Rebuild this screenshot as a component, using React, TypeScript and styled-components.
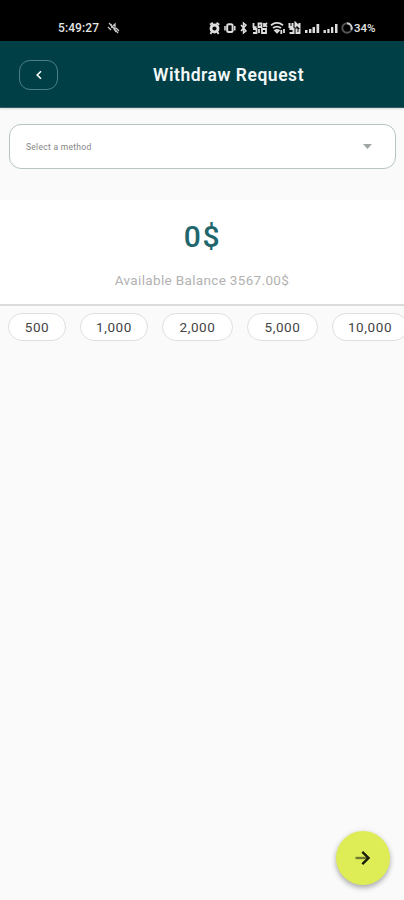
import React from "react";
import styled, { createGlobalStyle } from "styled-components";

const GlobalStyle = createGlobalStyle`
  * { box-sizing: border-box; }
  body { margin: 0; background: #fafafa; }
  button { font: inherit; padding: 0; }
`;

const Screen = styled.div`
  width: 404px;
  height: 900px;
  display: flex;
  flex-direction: column;
  overflow: hidden;
  background: #fafafa;
  font-family: Roboto, "Open Sans", sans-serif;
`;

const StatusBar = styled.div`
  height: 41px;
  flex: none;
  display: flex;
  align-items: center;
  padding: 14px 27px 0 58px;
  background: #000;
  color: #e4e4e4;
`;

const Clock = styled.span`
  width: 49px;
  font-size: 12px;
  line-height: 14px;
  font-weight: 500;
  letter-spacing: 0.1px;
`;

const StatusIcons = styled.div`
  margin-left: auto;
  display: flex;
  align-items: center;
`;

const Battery = styled.span`
  width: 23px;
  font-size: 11.5px;
  line-height: 14px;
  font-weight: 500;
  letter-spacing: 0;
`;

const Header = styled.header`
  height: 67px;
  flex: none;
  display: grid;
  grid-template-columns: 39px 1fr;
  align-items: center;
  padding: 2px 0 0 19px;
  background: #003f46;
  border-bottom: 1px solid #315d62;
  box-shadow: 0 1px 2px rgba(0, 0, 0, 0.15);
`;

const BackButton = styled.button`
  width: 39px;
  height: 30px;
  display: grid;
  place-items: center;
  border: 1px solid #4c7f8a;
  border-radius: 11px;
  background: transparent;
  color: #fff;
`;

const Title = styled.h1`
  margin: 0 0 0 95px;
  color: #f3f8f8;
  font-size: 17.5px;
  line-height: 22px;
  font-weight: 600;
  letter-spacing: 0.53px;
`;

const MethodSelect = styled.button`
  height: 45px;
  flex: none;
  display: flex;
  align-items: center;
  justify-content: space-between;
  margin: 16px 8px 31px 9px;
  padding: 0 23px 0 16px;
  border: 1px solid #b7c4c4;
  border-radius: 12px;
  background: #fff;
  color: #858585;
`;

const Placeholder = styled.span`
  font-size: 8.5px;
  line-height: 12px;
  letter-spacing: 0.28px;
`;

const BalancePanel = styled.section`
  height: 106px;
  flex: none;
  display: flex;
  flex-direction: column;
  align-items: center;
  padding-top: 18px;
  background: #fff;
  border-bottom: 2px solid #dadcdc;
`;

const Amount = styled.div`
  padding-left: 1px;
  color: #20666c;
  font-size: 30px;
  line-height: 38px;
  font-weight: 500;
  letter-spacing: 1.6px;
`;

const Available = styled.div`
  margin-top: 15px;
  color: #b2b2b2;
  font-size: 13.5px;
  line-height: 18px;
  letter-spacing: 0.34px;
`;

const Chips = styled.div`
  display: flex;
  flex: none;
  gap: 14px;
  padding: 7px 0 0 8px;
`;

const Chip = styled.button<{ $width: number }>`
  width: ${({ $width }) => $width}px;
  height: 28px;
  flex: none;
  border: 1px solid #dfdfdf;
  border-radius: 14px;
  background: #fff;
  color: #444;
  font-size: 13.5px;
  line-height: 26px;
  letter-spacing: 0.6px;
`;

const Footer = styled.footer`
  margin-top: auto;
  display: flex;
  justify-content: flex-end;
  padding: 0 14px 15px;
`;

const NextButton = styled.button`
  width: 54px;
  height: 54px;
  display: grid;
  place-items: center;
  border: 0;
  border-radius: 50%;
  background: #deed55;
  box-shadow: 0 3px 5px rgba(0, 0, 0, 0.25), 0 1px 7px rgba(0, 0, 0, 0.1);
`;

const amounts = [
  { label: "500", width: 58 },
  { label: "1,000", width: 68 },
  { label: "2,000", width: 71 },
  { label: "5,000", width: 71 },
  { label: "10,000", width: 76 },
];

const MutedSignal = () => (
  <svg width="13" height="12" viewBox="0 0 13 12" fill="none" stroke="#c8c8c8" strokeWidth="1.3">
    <path d="M1 5l3 3M4 2l1 4M5 5l3-3v5M2 1l9 10M7 7l2 3M9 6l3 3" />
  </svg>
);

const DeviceIcons = () => (
  <svg width="132" height="14" viewBox="0 0 132 14" fill="none" stroke="#dedede" strokeWidth="1.5">
    <circle cx="5.5" cy="7.5" r="3.5" strokeWidth="2.8" />
    <path d="M1 3.8L3.8 1.8M7.5 1.8l2.8 2M2.5 11l-1 2M8.5 11l1 2" strokeWidth="1.8" />
    <rect x="18.2" y="3.3" width="5.4" height="7.8" rx="1.5" strokeWidth="2" />
    <path d="M16 5v4.5M25.8 5v4.5" />
    <path d="M32 4l5 6-2.5 2V2L37 4l-5 6" />
    <path d="M44.5 2v4.2h3M49.5 2.5h3v3.5h-3zM55 2v4M58 2l-2 2 2 2M44 8h3.5v4H44M50 8v4M53 8h4v4h-4z" strokeWidth="1.8" />
    <path d="M62 4.2c4-3 8-3 12 0M64 7c3-2 5-2 8 0M66 9.5c1.5-1 2.5-1 4 0l-2 2zM72.3 9v4M75 8v4" strokeWidth="1.8" />
    <path d="M80.5 2v4h3V2M86.5 6.5V2l4 4V2M80.5 8h4v4h-4M87.5 7.5V12h3V8" strokeWidth="2" />
    <g fill="#dedede" stroke="none">
      <path d="M96 9h2.5v3H96zM100 8h2.4v4H100zM103.5 6h2.5v6h-2.5zM107.5 3h2.7v9h-2.7z" />
      <path d="M114.5 9h2.4v3h-2.4zM118.3 8h2.3v4h-2.3zM122 6h2.3v6H122zM126 3h2.5v9H126z" />
    </g>
  </svg>
);

const BatteryRing = () => (
  <svg width="13" height="14" viewBox="0 0 13 14" fill="none" strokeWidth="1.9">
    <circle cx="6" cy="7" r="4.7" stroke="#555" />
    <path d="M6 2.3a4.7 4.7 0 014.3 6.6" stroke="#ccc" />
  </svg>
);

export default function App() {
  return (
    <>
      <GlobalStyle />
      <Screen>
        <StatusBar>
          <Clock>5:49:27</Clock>
          <MutedSignal />
          <StatusIcons>
            <DeviceIcons />
            <BatteryRing />
            <Battery>34%</Battery>
          </StatusIcons>
        </StatusBar>
        <Header>
          <BackButton aria-label="Back">
            <svg width="8" height="12" viewBox="0 0 8 12" fill="none" stroke="currentColor" strokeWidth="1.6">
              <path d="M6 2.2L2.2 6 6 9.8" />
            </svg>
          </BackButton>
          <Title>Withdraw Request</Title>
        </Header>
        <MethodSelect>
          <Placeholder>Select a method</Placeholder>
          <svg width="9" height="5" viewBox="0 0 9 5">
            <path d="M0 0h9L4.5 5z" fill="#a1a7a7" />
          </svg>
        </MethodSelect>
        <BalancePanel>
          <Amount>0$</Amount>
          <Available>Available Balance 3567.00$</Available>
        </BalancePanel>
        <Chips>
          {amounts.map(({ label, width }) => (
            <Chip key={label} $width={width}>{label}</Chip>
          ))}
        </Chips>
        <Footer>
          <NextButton aria-label="Continue">
            <svg width="18" height="18" viewBox="0 0 18 18" fill="none">
              <path d="M1.5 9H13" stroke="#717a2d" strokeWidth="2.4" />
              <path d="M8.3 2.8L14.5 9l-6.2 6.2" stroke="#171b0b" strokeWidth="2.4" />
            </svg>
          </NextButton>
        </Footer>
      </Screen>
    </>
  );
}
